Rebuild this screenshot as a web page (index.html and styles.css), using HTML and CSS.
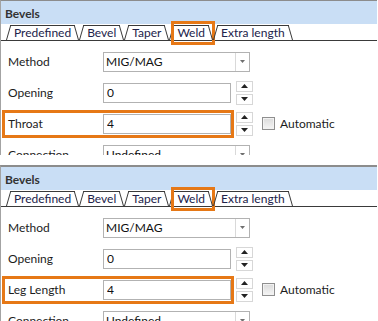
FILE: index.html
```html
<!DOCTYPE html>
<html lang="en">
<head>
  <meta charset="UTF-8">
  <title>Bevels - Weld</title>
  <link rel="stylesheet" href="styles.css">
</head>
<body>

  <!-- Weld tab, throat -->
  <div class="panel">
    <div class="title">Bevels</div>
    <div class="tabs">
      <div class="tab">Predefined</div>
      <div class="tab">Bevel</div>
      <div class="tab">Taper</div>
      <div class="tab active">Weld<span class="hl"></span></div>
      <div class="tab">Extra length</div>
    </div>
    <div class="form">
      <div class="row">
        <div class="field">
          <div class="label">Method</div>
          <div class="select"><span class="value">MIG/MAG</span><span class="arrow"><svg width="5" height="3" viewBox="0 0 5 3"><path d="M0 0H5L2.5 3Z" fill="#6f6f6f"/></svg></span></div>
        </div>
      </div>
      <div class="row">
        <div class="field">
          <div class="label">Opening</div>
          <input class="input" type="text" value="0" readonly>
        </div>
        <div class="spin">
          <span><svg width="7" height="4" viewBox="0 0 7 4"><path d="M0 4L3.5 0L7 4Z"/></svg></span>
          <span><svg width="7" height="4" viewBox="0 0 7 4"><path d="M0 0H7L3.5 4Z"/></svg></span>
        </div>
      </div>
      <div class="row">
        <div class="field marked">
          <div class="label">Throat</div>
          <input class="input" type="text" value="4" readonly>
        </div>
        <div class="spin">
          <span><svg width="7" height="4" viewBox="0 0 7 4"><path d="M0 4L3.5 0L7 4Z"/></svg></span>
          <span><svg width="7" height="4" viewBox="0 0 7 4"><path d="M0 0H7L3.5 4Z"/></svg></span>
        </div>
        <label class="check"><span class="box"></span>Automatic</label>
      </div>
      <div class="row">
        <div class="field">
          <div class="label">Connection</div>
          <div class="select"><span class="value">Undefined</span><span class="arrow"><svg width="5" height="3" viewBox="0 0 5 3"><path d="M0 0H5L2.5 3Z" fill="#6f6f6f"/></svg></span></div>
        </div>
      </div>
    </div>
  </div>

  <!-- Weld tab, leg length -->
  <div class="panel">
    <div class="title">Bevels</div>
    <div class="tabs">
      <div class="tab">Predefined</div>
      <div class="tab">Bevel</div>
      <div class="tab">Taper</div>
      <div class="tab active">Weld<span class="hl"></span></div>
      <div class="tab">Extra length</div>
    </div>
    <div class="form">
      <div class="row">
        <div class="field">
          <div class="label">Method</div>
          <div class="select"><span class="value">MIG/MAG</span><span class="arrow"><svg width="5" height="3" viewBox="0 0 5 3"><path d="M0 0H5L2.5 3Z" fill="#6f6f6f"/></svg></span></div>
        </div>
      </div>
      <div class="row">
        <div class="field">
          <div class="label">Opening</div>
          <input class="input" type="text" value="0" readonly>
        </div>
        <div class="spin">
          <span><svg width="7" height="4" viewBox="0 0 7 4"><path d="M0 4L3.5 0L7 4Z"/></svg></span>
          <span><svg width="7" height="4" viewBox="0 0 7 4"><path d="M0 0H7L3.5 4Z"/></svg></span>
        </div>
      </div>
      <div class="row">
        <div class="field marked">
          <div class="label">Leg Length</div>
          <input class="input" type="text" value="4" readonly>
        </div>
        <div class="spin">
          <span><svg width="7" height="4" viewBox="0 0 7 4"><path d="M0 4L3.5 0L7 4Z"/></svg></span>
          <span><svg width="7" height="4" viewBox="0 0 7 4"><path d="M0 0H7L3.5 4Z"/></svg></span>
        </div>
        <label class="check"><span class="box"></span>Automatic</label>
      </div>
      <div class="row">
        <div class="field">
          <div class="label">Connection</div>
          <div class="select"><span class="value">Undefined</span><span class="arrow"><svg width="5" height="3" viewBox="0 0 5 3"><path d="M0 0H5L2.5 3Z" fill="#6f6f6f"/></svg></span></div>
        </div>
      </div>
    </div>
  </div>

</body>
</html>
```

FILE: styles.css
```css
body {
  margin: 0;
  background: #fff;
  font-family: Lato, "Open Sans", sans-serif;
  font-size: 12px;
  color: #1c1c1c;
}

.panel {
  width: 376px;
  height: 154px;
  border-top: 2px solid #8c8c8c;
  border-left: 1px solid #a3a3a3;
  overflow: hidden;
}

.panel:first-child {
  margin-top: -1px;
}

.panel + .panel {
  margin-top: 10px;
}

.title {
  height: 21px;
  padding: 2px 0 0 4px;
  line-height: 21px;
  background: #c9def5;
  font-weight: bold;
  color: #333;
}

/* tab strip */
.tabs {
  display: flex;
  height: 15px;
  padding: 1px 0 0 5px;
  border-bottom: 1px solid #3a3a3a;
}

.tab {
  position: relative;
  height: 15px;
  padding: 0 8px;
  line-height: 15px;
  color: #22224a;
}

.tab::before,
.tab::after {
  content: "";
  position: absolute;
  top: 0;
  bottom: 0;
  width: 60%;
  border-top: 1px solid #3a3a3a;
}

.tab::before {
  left: 0;
  border-left: 1px solid #3a3a3a;
  transform: skewX(-16deg);
  transform-origin: bottom left;
}

.tab::after {
  right: 0;
  border-right: 1px solid #3a3a3a;
  transform: skewX(16deg);
  transform-origin: bottom right;
}

.hl {
  position: absolute;
  left: 2px;
  right: -2px;
  top: -4px;
  bottom: -5px;
  border: 3px solid #e67816;
}

/* form rows */
.form {
  padding: 5px 0 0 1px;
}

.row {
  display: flex;
  align-items: center;
  height: 31px;
}

.field {
  display: flex;
  align-items: center;
  height: 22px;
  border: 3px solid transparent;
}

.field.marked {
  border-color: #e67816;
}

.label {
  width: 95px;
  padding-left: 3px;
}

.input {
  width: 128px;
  height: 20px;
  box-sizing: border-box;
  margin: 0;
  padding: 0 3px;
  border: 1px solid #b2b2b2;
  font: inherit;
  color: #111;
  outline: none;
}

.select {
  display: flex;
  width: 147px;
  height: 20px;
  box-sizing: border-box;
  border: 1px solid #b2b2b2;
}

.select .value {
  flex: 1;
  padding-left: 2px;
  line-height: 18px;
  color: #111;
}

.select .arrow {
  display: flex;
  align-items: center;
  justify-content: center;
  width: 13px;
  border-left: 1px solid #d9d9d9;
}

.spin {
  display: flex;
  flex-direction: column;
  gap: 2px;
  margin-left: 2px;
}

.spin span {
  display: flex;
  align-items: center;
  justify-content: center;
  width: 17px;
  height: 11px;
  box-sizing: border-box;
  border: 1px solid #d7d7d7;
}

.spin svg path {
  fill: #222;
}

.check {
  display: flex;
  align-items: center;
  gap: 5px;
  margin-left: 9px;
}

.check .box {
  width: 13px;
  height: 13px;
  box-sizing: border-box;
  border: 1px solid #8f8f8f;
  background: linear-gradient(#dadada, #f5f5f5);
  box-shadow: inset 0 0 0 1px #f2f2f2;
}
```
